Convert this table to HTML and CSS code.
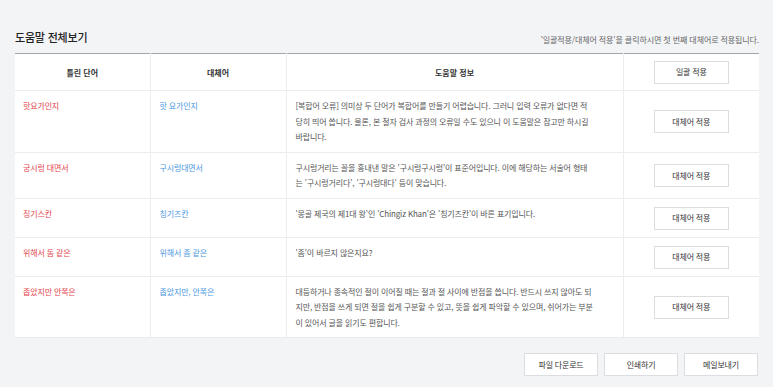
FILE: index.html
```html
<!DOCTYPE html>
<html lang="ko">
<head>
<meta charset="utf-8">
<title>도움말 전체보기</title>
<link rel="stylesheet" href="styles.css">
</head>
<body>
<div class="page">
  <div class="head">
    <h1 class="title">도움말 전체보기</h1>
    <p class="note">'일괄적용/대체어 적용'을 클릭하시면 첫 번째 대체어로 적용됩니다.</p>
  </div>
  <table class="grid">
    <colgroup>
      <col class="c1"><col class="c2"><col class="c3"><col class="c4">
    </colgroup>
    <thead>
      <tr>
        <th>틀린 단어</th>
        <th>대체어</th>
        <th>도움말 정보</th>
        <th><button class="btn">일괄 적용</button></th>
      </tr>
    </thead>
    <tbody>
      <tr>
        <td class="wrong">핫요가인지</td>
        <td class="right">핫 요가인지</td>
        <td class="info">[복합어 오류] 의미상 두 단어가 복합어를 만들기 어렵습니다. 그러니 입력 오류가 없다면 적<br>당히 띄어 씁니다. 물론, 본 철자 검사 과정의 오류일 수도 있으니 이 도움말은 참고만 하시길<br>바랍니다.</td>
        <td class="act"><button class="btn">대체어 적용</button></td>
      </tr>
      <tr>
        <td class="wrong">궁시렁 대면서</td>
        <td class="right">구시렁대면서</td>
        <td class="info">구시렁거리는 꼴을 흉내낸 말은 '구시렁구시렁'이 표준어입니다. 이에 해당하는 서술어 형태<br>는 '구시렁거리다', '구시렁대다' 등이 맞습니다.</td>
        <td class="act"><button class="btn">대체어 적용</button></td>
      </tr>
      <tr>
        <td class="wrong">징기스칸</td>
        <td class="right">칭기즈칸</td>
        <td class="info">'몽골 제국의 제1대 왕'인 'Chingiz Khan'은 '칭기즈칸'이 바른 표기입니다.</td>
        <td class="act"><button class="btn">대체어 적용</button></td>
      </tr>
      <tr>
        <td class="wrong">위해서 돔 같은</td>
        <td class="right">위해서 좀 같은</td>
        <td class="info">'좀'이 바르지 않은지요?</td>
        <td class="act"><button class="btn">대체어 적용</button></td>
      </tr>
      <tr>
        <td class="wrong">좁았지만 안쪽은</td>
        <td class="right">좁았지만, 안쪽은</td>
        <td class="info">대등하거나 종속적인 절이 이어질 때는 절과 절 사이에 반점을 씁니다. 반드시 쓰지 않아도 되<br>지만, 반점을 쓰게 되면 절을 쉽게 구분할 수 있고, 뜻을 쉽게 파악할 수 있으며, 쉬어가는 부분<br>이 있어서 글을 읽기도 편합니다.</td>
        <td class="act"><button class="btn">대체어 적용</button></td>
      </tr>
    </tbody>
  </table>
  <div class="footer">
    <button class="btn wide">파일 다운로드</button>
    <button class="btn wide">인쇄하기</button>
    <button class="btn wide">메일보내기</button>
  </div>
</div>
</body>
</html>
```
FILE: styles.css
```css
* { box-sizing: border-box; }
html, body {
  margin: 0;
  padding: 0;
  background: #f3f4f6;
}
body {
  font-family: "Noto Sans CJK KR", "Noto Sans", sans-serif;
  color: #333;
}
.page {
  padding: 0 14px 0 15px;
}
.head {
  display: flex;
  justify-content: space-between;
  align-items: flex-end;
  height: 53px;
  padding-bottom: 9px;
}
.title {
  margin: 0;
  font-size: 11px;
  font-weight: 500;
  letter-spacing: -0.2px;
  color: #222;
  line-height: 14px;
}
.note {
  margin: 0 0 -2px 0;
  font-size: 8px;
  color: #666;
  letter-spacing: -0.1px;
  line-height: 12px;
}
.grid {
  width: 744px;
  border-collapse: collapse;
  table-layout: fixed;
  background: #fff;
  border-top: 1px solid #a3a6ac;
  font-size: 8px;
}
.c1 { width: 135px; }
.c2 { width: 136px; }
.c3 { width: 337px; }
.c4 { width: 136px; }
.grid th, .grid td {
  border-right: 1px solid #ececec;
  border-bottom: 1px solid #ececec;
}
.grid th:last-child, .grid td:last-child { border-right: none; }
.grid th {
  height: 37px;
  font-weight: 700;
  color: #333;
  text-align: center;
  vertical-align: middle;
  padding: 0;
}
.grid td {
  vertical-align: top;
  padding: 7px 8px 7px 8px;
  line-height: 15.5px;
  letter-spacing: -0.15px;
}
.grid td.info {
  padding-left: 9px;
  color: #555;
  white-space: nowrap;
}
.wrong { color: #e3464e; }
.right { color: #4a97df; padding-left: 9px !important; }
.grid td.act {
  vertical-align: middle;
  text-align: center;
  padding: 8px 0 7px;
  line-height: 0;
}
.btn {
  display: inline-flex;
  align-items: center;
  justify-content: center;
  width: 75px;
  height: 23px;
  margin: 0;
  padding: 0;
  background: #fff;
  border: 1px solid #dcdde0;
  border-radius: 0;
  font-family: inherit;
  font-size: 8px;
  line-height: 12px;
  color: #333;
  letter-spacing: -0.2px;
  vertical-align: middle;
}
.footer {
  display: flex;
  justify-content: flex-end;
  gap: 6px;
  margin-top: 15px;
  padding-right: 1px;
}
.btn.wide { width: 74px; }
```
